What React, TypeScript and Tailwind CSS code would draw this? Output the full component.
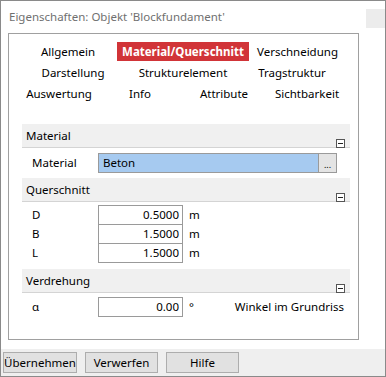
import React from 'react';

const font = { fontFamily: '"Noto Sans", "Open Sans", sans-serif' };

function Minus() {
  return (
    <span className="flex h-[9px] w-[9px] items-center justify-center border border-[#555] bg-white">
      <span className="h-px w-[5px] bg-[#222]" />
    </span>
  );
}

function Header({ title }: { title: string }) {
  return (
    <div className="flex h-[24px] items-start justify-between border-b border-[#d4d4d4] bg-[#f0f0f0] pl-[4px] pr-[5px]">
      <span className="mt-[4px] leading-[16px]">{title}</span>
      <span className="mt-[15px]">
        <Minus />
      </span>
    </div>
  );
}

function NumRow({ label, value, unit, top = false }: { label: string; value: string; unit: string; top?: boolean }) {
  return (
    <div className={`flex h-[20px] items-center ${top ? '' : '-mt-px'}`}>
      <span className="w-[76px] pl-[10px]">{label}</span>
      <span className="flex h-[20px] w-[85px] items-center justify-end border border-[#9a9a9a] bg-white pr-[3px]">{value}</span>
      <span className="ml-[6px]">{unit}</span>
    </div>
  );
}

export default function App() {
  return (
    <div className="flex h-[377px] w-[386px] flex-col border border-[#8a8a8a] bg-white text-[11.5px] text-black" style={font}>
      {/* Title */}
      <div className="flex h-[32px] items-start justify-between">
        <span className="ml-[8px] mt-[7px] text-[11.5px] leading-[18px] text-[#707070]">
          Eigenschaften: Objekt 'Blockfundament'
        </span>
        <span className="mt-[8px] h-[19px] w-[19px] bg-[#ececec]" />
      </div>

      {/* Tab box */}
      <div className="ml-[7px] h-[307px] w-[351px] border border-[#a0a0a0] pt-[7px]">
        <div className="flex h-[21px] items-center">
          <span className="ml-[10px] w-[98px] text-center">Allgemein</span>
          <span className="flex h-[19px] w-[132px] items-center justify-center bg-[#d13438] font-bold text-white">
            Material/Querschnitt
          </span>
          <span className="ml-[8px] w-[80px] text-center">Verschneidung</span>
        </div>
        <div className="flex h-[21px] items-center">
          <span className="ml-[14px] w-[100px] text-center">Darstellung</span>
          <span className="ml-[10px] w-[100px] text-center">Strukturelement</span>
          <span className="ml-[9px] w-[100px] text-center">Tragstruktur</span>
        </div>
        <div className="flex h-[21px] items-center">
          <span className="ml-[10px] w-[80px] text-center">Auswertung</span>
          <span className="ml-[1px] w-[80px] text-center">Info</span>
          <span className="ml-[4px] w-[80px] text-center">Attribute</span>
          <span className="ml-[3px] w-[80px] text-center">Sichtbarkeit</span>
        </div>

        {/* Panel */}
        <div className="ml-[13px] mt-[20px] w-[328px]">
          <Header title="Material" />
          <div className="flex h-[30px] items-center">
            <span className="w-[76px] pl-[10px]">Material</span>
            <span className="flex h-[20px] w-[221px] items-center border border-[#9a9a9a] bg-[#a6caf0] pl-[4px]">Beton</span>
            <span className="-ml-px flex h-[20px] w-[19px] items-end justify-center border border-[#9a9a9a] bg-[#e4e4e4] pb-[2px] text-[9px] leading-[10px]">
              ...
            </span>
          </div>

          <Header title="Querschnitt" />
          <div className="pt-[3px]">
            <NumRow label="D" value="0.5000" unit="m" top />
            <NumRow label="B" value="1.5000" unit="m" />
            <NumRow label="L" value="1.5000" unit="m" />
          </div>

          <div className="mt-[6px]">
            <Header title="Verdrehung" />
          </div>
          <div className="flex h-[28px] items-center">
            <span className="w-[76px] pl-[10px]">α</span>
            <span className="flex h-[20px] w-[85px] items-center justify-end border border-[#9a9a9a] bg-white pr-[3px]">0.00</span>
            <span className="ml-[6px]">°</span>
            <span className="ml-auto pr-[6px]">Winkel im Grundriss</span>
          </div>
        </div>
      </div>

      {/* Button bar */}
      <div className="mt-[9px] flex flex-1 items-start gap-[8px] bg-[#efefef] pl-[2px] pt-[3px]">
        <button className="flex h-[21px] w-[74px] items-center justify-center border border-[#adadad] bg-[#e1e1e1]">Übernehmen</button>
        <button className="flex h-[21px] w-[73px] items-center justify-center border border-[#adadad] bg-[#e1e1e1]">Verwerfen</button>
        <button className="flex h-[21px] w-[73px] items-center justify-center border border-[#adadad] bg-[#e1e1e1]">Hilfe</button>
      </div>
    </div>
  );
}
